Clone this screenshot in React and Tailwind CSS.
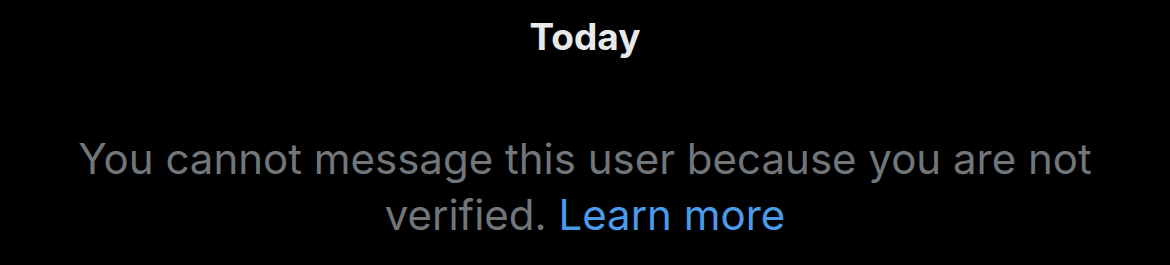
import React from "react"

export default function App() {
  return (
    <div className="w-[1170px] h-[265px] bg-black flex flex-col items-center" style={{ fontFamily: "Inter, 'Noto Sans', sans-serif" }}>
      <div className="pt-[13px] text-[37px] leading-[48px] font-bold text-[#e7e9ea]">Today</div>
      <p className="mt-[70px] px-[70px] text-center text-[42px] leading-[56px] text-[#71767b] tracking-[0px]">
        You cannot message this user because you are not verified.{" "}
        <span className="text-[#4a9bea]">Learn more</span>
      </p>
    </div>
  )
}
